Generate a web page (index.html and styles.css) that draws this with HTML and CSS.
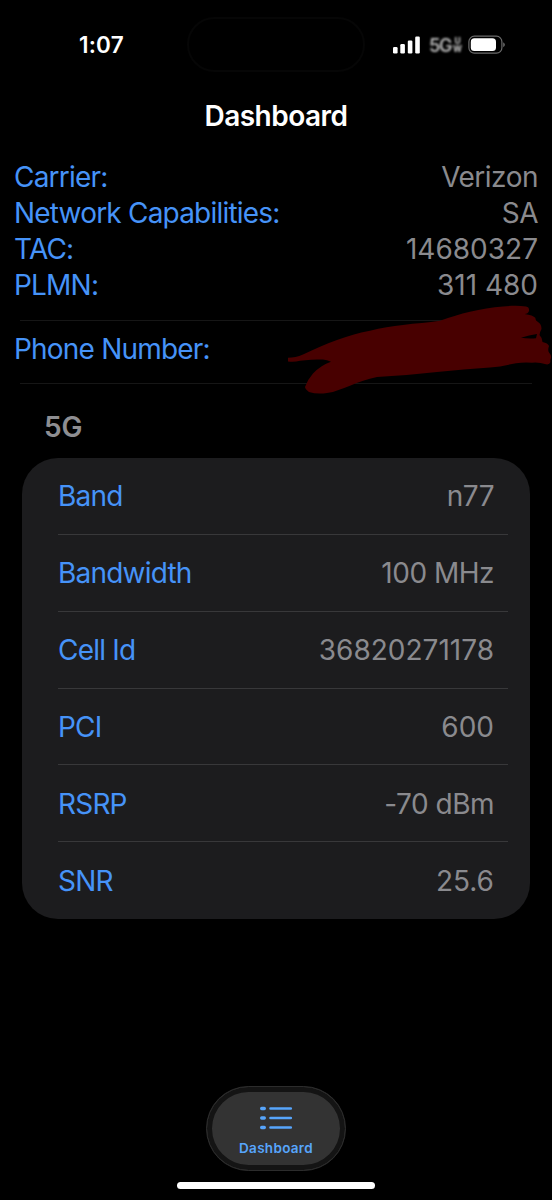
FILE: index.html
```
<!DOCTYPE html>
<html lang="en">
<head>
  <meta charset="UTF-8">
  <title>Dashboard</title>
  <meta name="viewport" content="width=device-width, initial-scale=1">
  <link rel="stylesheet" href="styles.css">
</head>
<body>

<header class="status-bar">
  <div class="time">1:07</div>
  <div class="island"></div>
  <div class="status-icons">
    <svg class="signal" width="28" height="18" viewBox="0 0 28 18" fill="#fff" aria-hidden="true">
      <rect x="0" y="11" width="4.6" height="6.5" rx="1.2" />
      <rect x="7.3" y="8" width="4.6" height="9.5" rx="1.2" />
      <rect x="14.8" y="4.5" width="4.6" height="13" rx="1.2" />
      <rect x="22.2" y="0.5" width="4.6" height="17" rx="1.2" />
    </svg>
    <div class="network"><span>5G</span><span class="uw"><span>U</span><span>W</span></span></div>
    <svg class="battery" width="38" height="20" viewBox="0 0 38 20" aria-hidden="true">
      <rect x="0.9" y="1.2" width="33" height="17" rx="5.5" fill="none" stroke="#6b6b6b" stroke-width="1.2" />
      <rect x="2.8" y="3.3" width="25.2" height="12.8" rx="3.6" fill="#fff" />
      <path d="M35.4 7.2 Q38 9.7 35.4 12.2 Z" fill="#888" />
    </svg>
  </div>
</header>

<h1 class="title">Dashboard</h1>

<main>
  <section class="info">
    <div class="info-row"><span class="label">Carrier:</span><span class="value">Verizon</span></div>
    <div class="info-row"><span class="label">Network Capabilities:</span><span class="value">SA</span></div>
    <div class="info-row"><span class="label">TAC:</span><span class="value number">14680327</span></div>
    <div class="info-row"><span class="label">PLMN:</span><span class="value number">311 480</span></div>
  </section>

  <section class="phone">
    <span class="label">Phone Number:</span>
    <svg class="scribble" width="264" height="90" viewBox="288 305 264 90" fill="#480000" aria-hidden="true">
      <path d="M288 357.8 C293 357.8 298 356.6 303 354.5 C315 349 325 344 337 340 C348 336 358 333 370 330.7 C381 328 392 326 403 325 C416 323 428 323 440 320.7 C451 317 460 314 470 311.7 C481 309 492 307.5 503 306.5 C511 305.6 519 305.4 526 306.5 Q529.5 307 529 311 Q528 314 524.5 314 Q533 315 535.5 318 Q535 320.5 538 322 Q541.5 324 541.5 329 Q540 331.5 539.5 335 Q542.5 338 542.5 342 Q548 343 549 346 Q547.5 350 549 352.5 Q551.5 355 551 358 Q550 360 550.5 362 Q549.5 365 546 364.3 Q539 362 532 362.7 Q524 362 516 363.2 C507 365 499 367 490 367.5 C472 369 455 370 437 372 C417 374 396 376 377 377 C367 379 359 382 350 385.7 C342 388.5 335 392 327 393 Q317 394.5 309 392 Q305 389 305 387 Q308 379 313 373.5 Q321 365 331 361.7 Q327 360 323 359.6 C315 359.7 307 360 300 360.7 Q294 362.5 288 361.5 Z M521 337.8 Q528 339 536 338.3 L537 334 Q529 335 521 337.8 Z" fill-rule="evenodd" />
    </svg>
  </section>

  <h2 class="group-title">5G</h2>
  <section class="card">
    <div class="card-row"><span class="label">Band</span><span class="value">n77</span></div>
    <div class="card-row"><span class="label">Bandwidth</span><span class="value">100 MHz</span></div>
    <div class="card-row"><span class="label">Cell Id</span><span class="value number">36820271178</span></div>
    <div class="card-row"><span class="label">PCI</span><span class="value number">600</span></div>
    <div class="card-row"><span class="label">RSRP</span><span class="value">-70 dBm</span></div>
    <div class="card-row"><span class="label">SNR</span><span class="value number">25.6</span></div>
  </section>
</main>

<nav class="tab-bar">
  <a class="tab">
    <svg width="33" height="24" viewBox="0 0 33 24" fill="none" stroke="#57a5fb" stroke-width="2.6" stroke-linecap="round" aria-hidden="true">
      <path d="M10.5 2.5h20.3M10.5 12h20.3M10.5 21.5h20.3" />
      <path d="M1.7 2.5h2.6M1.7 12h2.6M1.7 21.5h2.6" stroke-width="3.4" />
    </svg>
    <span>Dashboard</span>
  </a>
</nav>
<div class="home-indicator"></div>

</body>
</html>
```

FILE: styles.css
```
* { box-sizing: border-box; }
body { margin: 0; height: 1200px; display: flex; flex-direction: column; overflow: hidden; background: #000; font-family: Inter, "Liberation Sans", sans-serif; font-size: 28px; letter-spacing: -0.5px; }

.status-bar { height: 90px; display: grid; grid-template-columns: 187px 178px 187px; padding-top: 17px; }
.time { padding-left: 79px; height: 56px; line-height: 56px; font-size: 22.5px; font-weight: 600; color: #fff; letter-spacing: 0.2px; }
.island { height: 55px; border: 2px solid #060606; border-radius: 28px; }
.status-icons { height: 56px; display: flex; align-items: center; padding-left: 28px; }
.network { display: flex; align-items: center; gap: 1px; margin-left: 8px; width: 32px; font-size: 18px; font-weight: 600; letter-spacing: -1.4px; color: #b8b8b8; filter: blur(1px); }
.uw { display: flex; flex-direction: column; align-items: center; padding-left: 1px; font-size: 8.5px; font-weight: 800; line-height: 8px; letter-spacing: 0; }
.battery { margin-left: 7px; }

.title { margin: 0; height: 69px; line-height: 52px; text-align: center; font-size: 28px; font-weight: 600; color: #fff; letter-spacing: -0.5px; }

.label { color: #4693f8; letter-spacing: -0.8px; }
.value { color: #8a8a8e; }
.number { letter-spacing: 0; }
.info { padding: 0 14px; height: 161px; }
.info-row { display: flex; justify-content: space-between; line-height: 36px; }
.phone { position: relative; height: 64px; margin: 0 20px; border-top: 1px solid #161616; border-bottom: 1px solid #161616; line-height: 56px; }
.phone .label { margin-left: -6px; }
.scribble { position: absolute; left: 268px; top: -16px; }

.group-title { margin: 0; height: 74px; padding: 17px 0 0 44px; line-height: 52px; font-size: 28px; font-weight: 600; color: #8e8e92; letter-spacing: -0.2px; }
.card { height: 461px; margin: 0 22px; padding: 0 22px 0 36px; background: #1c1c1e; border-radius: 36px; display: grid; grid-template-rows: repeat(6, 1fr); }
.card-row { display: flex; justify-content: space-between; align-items: center; padding: 1px 14px 0 0; border-bottom: 1.5px solid #38383a; }
.card-row:last-child { border-bottom: 0; }

.tab-bar { margin-top: auto; display: flex; justify-content: center; }
.tab { width: 140px; height: 85px; display: flex; flex-direction: column; align-items: center; padding-top: 19px; border: 1px solid #2c2c2c; border-radius: 43px; background: #333; box-shadow: inset 0 0 0 5px #141414; color: #57a5fb; font-size: 13.5px; font-weight: 600; letter-spacing: 0.3px; }
.tab span { margin-top: 10px; line-height: 16px; }
.home-indicator { width: 198px; height: 7px; margin: 11px auto 11px; border-radius: 4px; background: #fff; }
```
